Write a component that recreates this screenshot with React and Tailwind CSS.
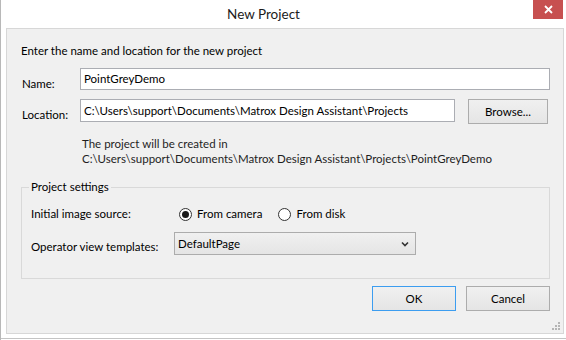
import React from "react";

const font = { fontFamily: '"Segoe UI", Lato, "Noto Sans", sans-serif' };

function Radio({ checked, label }) {
  return (
    <label className="flex items-center gap-[5px]">
      <span className="w-[13px] h-[13px] rounded-full border border-[#333333] bg-white flex items-center justify-center">
        {checked && <span className="w-[7px] h-[7px] rounded-full bg-[#1a1a1a]" />}
      </span>
      <span>{label}</span>
    </label>
  );
}

function Btn({ children, w, focus }) {
  return (
    <div
      className={
        "h-[25px] flex items-center justify-center border bg-gradient-to-b from-[#f0f0f0] to-[#e5e5e5] " +
        (focus ? "border-[#3c9df0]" : "border-[#acacac]")
      }
      style={{ width: w }}
    >
      {children}
    </div>
  );
}

export default function App() {
  return (
    <div
      className="w-[566px] h-[340px] bg-white text-black text-[11.5px] leading-[16px] relative border-l border-[#b8b8b8] flex flex-col"
      style={font}
    >
      <div className="h-[28px] flex items-center justify-center text-[13.5px] text-[#1b1b1b] pr-[40px]">
        New Project
      </div>
      <div className="absolute top-0 right-[3px] w-[30px] h-[19px] bg-[#c75050] flex items-center justify-center">
        <svg width="9" height="9" viewBox="0 0 9 9">
          <path d="M1 1L8 8M8 1L1 8" stroke="#fff" strokeWidth="1.8" />
        </svg>
      </div>

      <div className="ml-[5px] mr-[2px] h-[306px] border border-[#d7d7d7] bg-[#f0f0f0] flex flex-col pl-[14px] pr-[13px] pt-[14px] relative">
        <div>Enter the name and location for the new project</div>

        <div className="flex items-start mt-[9px]">
          <div className="w-[59px] pl-[1px] pt-[8px]">Name:</div>
          <div className="flex-1 h-[22px] border border-[#abadb3] bg-white flex items-center px-[3px]">
            PointGreyDemo
          </div>
        </div>

        <div className="flex items-start mt-[7px]">
          <div className="w-[59px] pl-[1px] pt-[8px]">Location:</div>
          <div className="w-[375px] h-[23px] border border-[#abadb3] bg-white flex items-center px-[3px]">
            C:\Users\support\Documents\Matrox Design Assistant\Projects
          </div>
          <div className="ml-[13px]">
            <Btn w="80px">Browse...</Btn>
          </div>
        </div>

        <div className="ml-[61px] mt-[12px] leading-[15px] text-[#1e1e1e]">
          <div>The project will be created in</div>
          <div>C:\Users\support\Documents\Matrox Design Assistant\Projects\PointGreyDemo</div>
        </div>

        <fieldset className="mt-[13px] h-[100px] border border-[#d9d9d9] pl-[9px] pr-[9px]">
          <legend className="px-[2px] ml-[-2px] leading-[16px]">Project settings</legend>
          <div className="flex items-center mt-[11px] h-[16px]">
            <div className="w-[148px]">Initial image source:</div>
            <Radio checked label="From camera" />
            <div className="ml-[16px]">
              <Radio label="From disk" />
            </div>
          </div>
          <div className="flex items-start mt-[10px]">
            <div className="w-[143px] pt-[7px]">Operator view templates:</div>
            <div className="w-[242px] h-[23px] border border-[#acacac] bg-gradient-to-b from-[#f0f0f0] to-[#e5e5e5] flex items-center justify-between pl-[3px] pr-[6px]">
              <span>DefaultPage</span>
              <svg width="8" height="6" viewBox="0 0 8 6">
                <path d="M1 1.5L4 4.5L7 1.5" stroke="#333" strokeWidth="1.6" fill="none" />
              </svg>
            </div>
          </div>
        </fieldset>

        <div className="flex justify-end gap-[10px] mt-[7px]">
          <Btn w="84px" focus>OK</Btn>
          <Btn w="84px">Cancel</Btn>
        </div>

        <svg className="absolute right-[3px] bottom-[3px]" width="8" height="8" viewBox="0 0 8 8">
          <rect x="6" y="0" width="2" height="2" fill="#b5b5b5" />
          <rect x="3" y="3" width="2" height="2" fill="#b5b5b5" />
          <rect x="6" y="3" width="2" height="2" fill="#b5b5b5" />
          <rect x="0" y="6" width="2" height="2" fill="#b5b5b5" />
          <rect x="3" y="6" width="2" height="2" fill="#b5b5b5" />
          <rect x="6" y="6" width="2" height="2" fill="#b5b5b5" />
        </svg>
      </div>
      <div className="mt-[4px] h-[1px] bg-[#c4c4c4]" />
    </div>
  );
}
